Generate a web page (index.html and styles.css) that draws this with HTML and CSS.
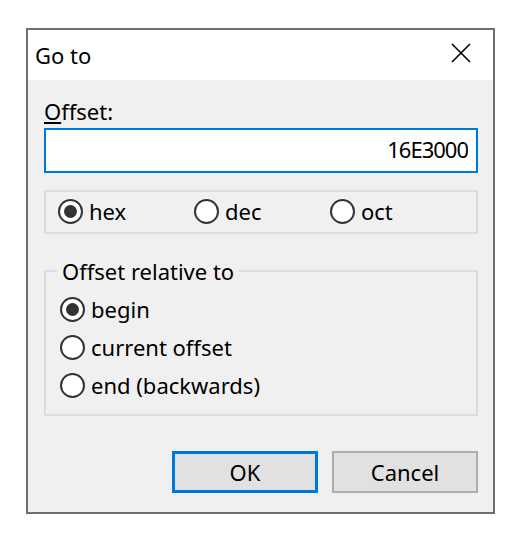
FILE: index.html
```html
<!DOCTYPE html>
<html lang="en">
<head>
  <meta charset="UTF-8">
  <title>Go to</title>
  <link rel="stylesheet" href="styles.css">
</head>
<body>
  <div class="dialog">
    <div class="titlebar">
      <span class="title">Go to</span>
      <svg class="close" width="20" height="20" viewBox="0 0 20 20">
        <path d="M1 1L19 19M19 1L1 19" stroke="#000" stroke-width="1.6" fill="none"/>
      </svg>
    </div>

    <div class="content">
      <label class="field-label" for="offset"><u>O</u>ffset:</label>
      <input id="offset" class="offset-input" type="text" value="16E3000">

      <div class="base-box">
        <label class="radio"><span class="dot checked"></span>hex</label>
        <label class="radio"><span class="dot"></span>dec</label>
        <label class="radio"><span class="dot"></span>oct</label>
      </div>

      <fieldset class="group">
        <legend>Offset relative to</legend>
        <label class="radio row"><span class="dot checked"></span>begin</label>
        <label class="radio row"><span class="dot"></span>current offset</label>
        <label class="radio row"><span class="dot"></span>end (backwards)</label>
      </fieldset>

      <div class="buttons">
        <button class="btn default">OK</button>
        <button class="btn">Cancel</button>
      </div>
    </div>
  </div>
</body>
</html>
```

FILE: styles.css
```css
body {
  margin: 0;
  background: #fff;
  font-family: "Noto Sans", sans-serif;
  font-size: 22px;
  color: #000;
}
.dialog {
  width: 469px;
  margin: 28px 0 0 26px;
  border: 2px solid #6f6f6f;
  box-sizing: border-box;
}
.titlebar {
  display: flex;
  justify-content: space-between;
  height: 50px;
  align-items: center;
  background: #fff;
  padding: 0 22px 0 7px;
}
.title {
  line-height: 30px;
}
.close {
  align-self: flex-start;
  margin-top: 13px;
}
.content {
  background: #f0f0f0;
  padding: 16px 15px 19px 16px;
}
.field-label {
  display: block;
  line-height: 30px;
}
.field-label u {
  text-underline-offset: 2px;
  text-decoration-thickness: 2px;
}
.offset-input {
  display: block;
  width: 100%;
  height: 45px;
  margin-top: 2px;
  box-sizing: border-box;
  border: 2px solid #0078d7;
  outline: none;
  padding: 0 8px 4px;
  font: inherit;
  letter-spacing: -1px;
  text-align: right;
  background: #fff;
}
.base-box {
  display: flex;
  align-items: center;
  height: 44px;
  margin-top: 17px;
  border: 2px solid #dcdcdc;
  box-sizing: border-box;
  padding: 0 0 2px 12px;
}
.radio {
  display: flex;
  align-items: center;
  width: 136px;
  line-height: 30px;
}
.dot {
  width: 25px;
  height: 25px;
  border: 2px solid #333;
  border-radius: 50%;
  box-sizing: border-box;
  background: #fff;
  margin-right: 6px;
  display: flex;
  align-items: center;
  justify-content: center;
  flex-shrink: 0;
}
.dot.checked::after {
  content: "";
  width: 13px;
  height: 13px;
  border-radius: 50%;
  background: #333;
}
.group {
  margin: 22px 0 0;
  padding: 4px 14px 10px;
  border: 2px solid #dcdcdc;
  min-inline-size: 0;
}
.group legend {
  padding: 0 5px;
  margin-left: -3px;
  line-height: 30px;
}
.radio.row {
  width: auto;
  height: 38px;
}
.buttons {
  display: flex;
  justify-content: flex-end;
  gap: 14px;
  margin-top: 35px;
}
.btn {
  width: 146px;
  height: 42px;
  box-sizing: border-box;
  background: #e1e1e1;
  border: 2px solid #adadad;
  font: inherit;
  color: #000;
  padding: 0;
}
.btn.default {
  border: 3px solid #0078d7;
}
```
